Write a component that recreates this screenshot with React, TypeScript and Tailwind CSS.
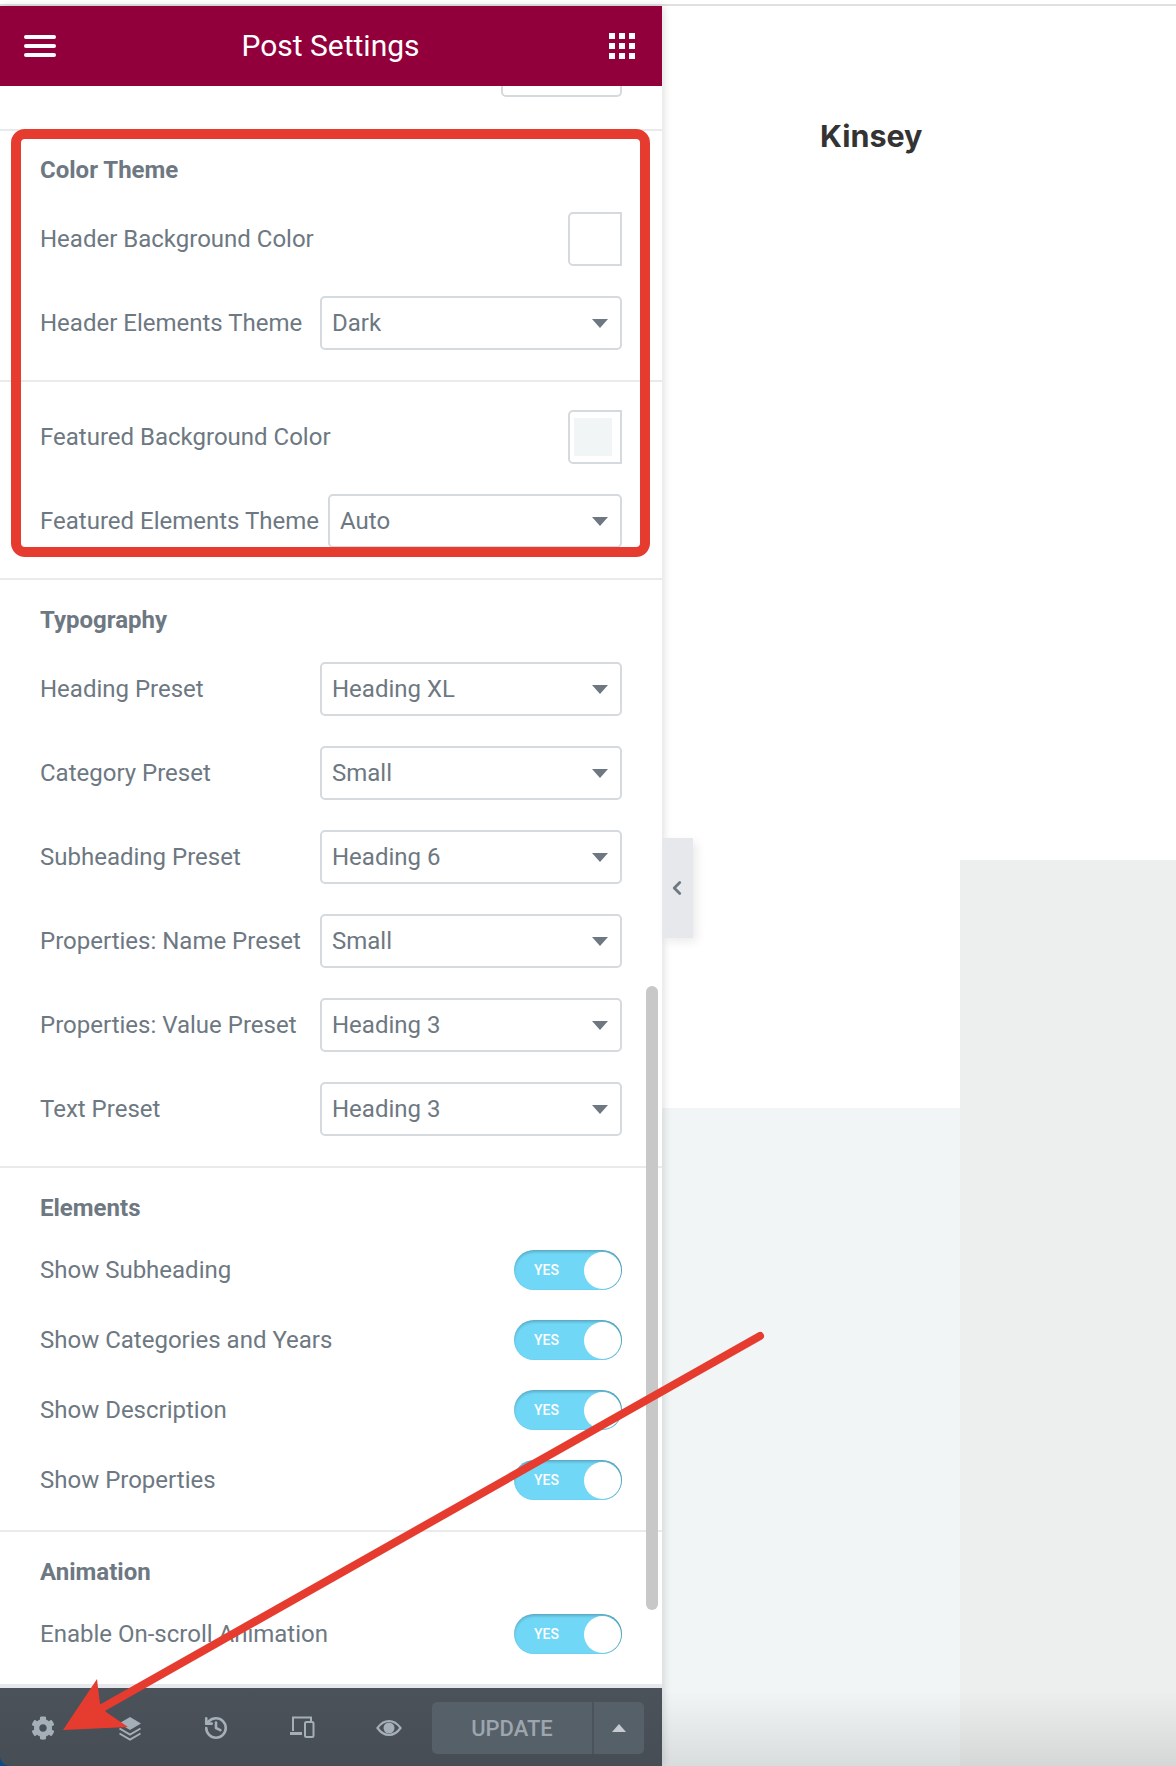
import { ChevronLeft, History } from "lucide-react";
import { FaCog } from "react-icons/fa";

const labelCls = "text-[24px] leading-[30px] text-[#6d7882] whitespace-nowrap";

function SectionTitle({ children, className }: { children: string; className: string }) {
  return <h3 className={`h-[30px] text-[24px] leading-[30px] font-bold text-[#6d7882] ${className}`}>{children}</h3>;
}

function SelectRow({ label, value, width = "w-[302px]" }: { label: string; value: string; width?: string }) {
  return (
    <div className="flex items-center justify-between h-[54px]">
      <span className={labelCls}>{label}</span>
      <div className={`${width} h-[54px] flex items-center justify-between pl-[10px] pr-[12px] border-2 border-[#d5dadf] rounded-[5px] bg-white`}>
        <span className="text-[24px] leading-[30px] text-[#6d7882]">{value}</span>
        <svg width="16" height="9" viewBox="0 0 16 9">
          <path d="M0 0h16L8 9z" fill="#6d7882" />
        </svg>
      </div>
    </div>
  );
}

function SwatchRow({ label, fill }: { label: string; fill?: boolean }) {
  return (
    <div className="flex items-center justify-between h-[54px]">
      <span className={labelCls}>{label}</span>
      <div className="w-[54px] h-[54px] flex items-center justify-center pl-[1px] pr-[6px] border-2 border-[#d5dadf] rounded-l-[5px] bg-white">
        {fill && <div className="w-[38px] h-[38px] bg-[#f1f5f6]" />}
      </div>
    </div>
  );
}

function ToggleRow({ label }: { label: string }) {
  return (
    <div className="flex items-center justify-between h-[40px]">
      <span className={labelCls}>{label}</span>
      <div className="w-[108px] h-[40px] flex items-center justify-between pl-[20px] pr-[1px] rounded-full bg-[#71d7f7] shadow-[inset_0_2px_3px_rgba(0,0,0,0.2),inset_-1px_0_1px_rgba(0,0,0,0.2)]">
        <span className="text-[14px] font-medium text-white">YES</span>
        <div className="w-[37px] h-[37px] rounded-full bg-white" />
      </div>
    </div>
  );
}

function LayersIcon() {
  return (
    <svg width="26" height="26" viewBox="0 0 26 26" fill="none">
      <path d="M13 2l11 6.500L13 15 2 8.500z" fill="#a4afb7" />
      <path d="M2.500 13.500L13 19.500l10.500-6M2.500 18.500L13 24.500l10.500-6" stroke="#a4afb7" strokeWidth="2" />
    </svg>
  );
}

function DevicesIcon() {
  return (
    <svg width="26" height="26" viewBox="0 0 26 26" fill="none" stroke="#a4afb7" strokeWidth="2">
      <path d="M4 17V3.500h18V7" />
      <path d="M1 19.500h12" strokeWidth="3" />
      <rect x="16" y="8" width="8.500" height="15" rx="1.500" />
    </svg>
  );
}

function EyeIcon() {
  return (
    <svg width="26" height="18" viewBox="0 0 26 18" fill="none">
      <path d="M1.500 9C5 4 9 2 13 2s8 2 11.500 7C21 14 17 16 13 16S5 14 1.500 9z" stroke="#a4afb7" strokeWidth="2.200" />
      <circle cx="13" cy="9" r="5.500" fill="#a4afb7" />
    </svg>
  );
}

function BottomBar() {
  const cell = "w-[86.4px] flex items-center justify-center text-[#a4afb7]";
  return (
    <div className="bg-[#0b4a87] h-[78px]">
      <div className="h-full flex items-center pt-[2px] rounded-bl-[10px] bg-gradient-to-b from-[#4c5259] to-[#474d54]">
        <div className={cell}><FaCog size={24} /></div>
        <div className={cell}><LayersIcon /></div>
        <div className={cell}><History size={26} strokeWidth={2.4} className="text-[#a4afb7]" /></div>
        <div className={`${cell} pb-[3px]`}><DevicesIcon /></div>
        <div className={cell}><EyeIcon /></div>
        <div className="w-[212px] h-[52px] flex rounded-[5px] bg-[#556068] overflow-hidden">
          <div className="w-[162px] flex items-center justify-center border-r-2 border-[#4c5259]">
            <span className="text-[22px] font-medium text-[#9da5ae]">UPDATE</span>
          </div>
          <div className="flex-1 flex items-center justify-center">
            <svg width="14" height="8" viewBox="0 0 14 8"><path d="M7 0l7 8H0z" fill="#c5cbd0" /></svg>
          </div>
        </div>
      </div>
    </div>
  );
}

function Panel() {
  return (
    <aside className="relative z-10 w-[662px] flex flex-col shrink-0 bg-white shadow-[2px_0_8px_rgba(0,0,0,0.12)]">
      <header className="h-[80px] flex items-center justify-between pl-[24px] pr-[27px] bg-[#92003b] text-white">
        <svg width="32" height="22" viewBox="0 0 32 22" fill="white">
          <rect y="0" width="32" height="4" rx="2" />
          <rect y="9" width="32" height="4" rx="2" />
          <rect y="18" width="32" height="4" rx="2" />
        </svg>
        <span className="mr-[4px] text-[30px] leading-[36px]">Post Settings</span>
        <svg width="26" height="26" viewBox="0 0 26 26" fill="white">
          <rect x="0" y="0" width="6" height="6" /><rect x="10" y="0" width="6" height="6" /><rect x="20" y="0" width="6" height="6" />
          <rect x="0" y="10" width="6" height="6" /><rect x="10" y="10" width="6" height="6" /><rect x="20" y="10" width="6" height="6" />
          <rect x="0" y="20" width="6" height="6" /><rect x="10" y="20" width="6" height="6" /><rect x="20" y="20" width="6" height="6" />
        </svg>
      </header>

      <div className="h-[45px] flex justify-end pr-[40px] border-b-2 border-[#e8eaec]">
        <div className="w-[121px] h-[11px] border-2 border-t-0 border-[#d5dadf] rounded-b-[5px]" />
      </div>

      <section className="h-[251px] px-[40px] pt-[24px] border-b-2 border-[#e8eaec]">
        <SectionTitle className="mb-[27px]">Color Theme</SectionTitle>
        <div className="flex flex-col gap-[30px]">
          <SwatchRow label="Header Background Color" />
          <SelectRow label="Header Elements Theme" value="Dark" />
        </div>
      </section>

      <section className="h-[198px] px-[40px] pt-[28px] border-b-2 border-[#e8eaec]">
        <div className="flex flex-col gap-[30px]">
          <SwatchRow label="Featured Background Color" fill />
          <SelectRow label="Featured Elements Theme" value="Auto" width="w-[294px]" />
        </div>
      </section>

      <section className="h-[588px] px-[40px] pt-[25px] border-b-2 border-[#e8eaec]">
        <SectionTitle className="mb-[27px]">Typography</SectionTitle>
        <div className="flex flex-col gap-[30px]">
          <SelectRow label="Heading Preset" value="Heading XL" />
          <SelectRow label="Category Preset" value="Small" />
          <SelectRow label="Subheading Preset" value="Heading 6" />
          <SelectRow label="Properties: Name Preset" value="Small" />
          <SelectRow label="Properties: Value Preset" value="Heading 3" />
          <SelectRow label="Text Preset" value="Heading 3" />
        </div>
      </section>

      <section className="h-[364px] px-[40px] pt-[25px] border-b-2 border-[#e8eaec]">
        <SectionTitle className="mb-[27px]">Elements</SectionTitle>
        <div className="flex flex-col gap-[30px]">
          <ToggleRow label="Show Subheading" />
          <ToggleRow label="Show Categories and Years" />
          <ToggleRow label="Show Description" />
          <ToggleRow label="Show Properties" />
        </div>
      </section>

      <section className="flex-1 px-[40px] pt-[25px]">
        <SectionTitle className="mb-[27px]">Animation</SectionTitle>
        <ToggleRow label="Enable On-scroll Animation" />
      </section>

      <div className="h-[4px] bg-[#e6e8eb]" />
      <BottomBar />

      {/* scrollbar */}
      <div className="absolute left-[646px] top-[980px] w-[12px] h-[624px] rounded-full bg-[#c8c8c8]" />
      {/* collapse tab */}
      <div className="absolute left-[662px] top-[832px] w-[31px] h-[100px] flex items-center justify-center bg-[#e6e8eb] shadow-[4px_4px_10px_rgba(0,0,0,0.08)]">
        <ChevronLeft size={22} strokeWidth={3} className="text-[#6d7882] -translate-x-[1px]" />
      </div>
    </aside>
  );
}

function Canvas() {
  return (
    <main className="relative flex-1 flex bg-white">
      <div className="w-[298px] flex flex-col">
        <div className="flex-1 pl-[158px] pt-[111px]">
          <span className="font-[Inter,sans-serif] text-[30.5px] leading-[38px] font-bold text-[#333333]">Kinsey</span>
        </div>
        <div className="h-[658px] bg-[#f1f5f6]" />
      </div>
      <div className="flex-1 pt-[854px]">
        <div className="h-full bg-[#ecefee]" />
      </div>
      {/* shadow along the bottom edge */}
      <div className="absolute left-0 right-0 bottom-0 h-[76px] bg-gradient-to-b from-black/0 to-black/10" />
    </main>
  );
}

export default function App() {
  return (
    <div className="relative h-[1766px] w-[1176px] flex flex-col overflow-hidden bg-white font-[Roboto,sans-serif]">
      <div className="h-[6px] shrink-0 border-b-2 border-[#e0e0e0]" />
      <div className="flex-1 flex">
        <Panel />
        <Canvas />
      </div>

      {/* annotations */}
      <div className="absolute left-[11px] top-[129px] w-[639px] h-[428px] z-20 border-[10px] border-[#e63c30] rounded-[14px]" />
      <svg className="absolute left-0 top-0 z-20 pointer-events-none" width="1176" height="1766">
        <line x1="760" y1="1336" x2="102" y2="1708" stroke="#e63c30" strokeWidth="8" strokeLinecap="round" />
        <polygon points="63,1730 97,1679 100,1704 106,1712 128,1727" fill="#e63c30" />
      </svg>
    </div>
  );
}
